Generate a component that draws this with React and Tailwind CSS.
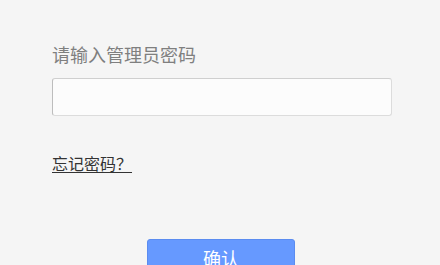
export default function App() {
  return (
    <div className="w-[440px] h-[265px] overflow-hidden bg-[#f5f5f5]" style={{ fontFamily: '"Noto Sans CJK SC", "Liberation Sans", sans-serif' }}>
      <div className="pl-[52px] pr-[48px] pt-[42px]">
        <div className="text-[18px] leading-[24px] text-[#7f7f7f]">请输入管理员密码</div>
        <input
          type="password"
          className="mt-[12px] block w-[340px] h-[38px] bg-[#fcfcfc] border border-[#dcdcdc] border-l-[#bdbdbd] border-t-[#cfcfcf] rounded-[3px] outline-none"
        />
        <div className="mt-[35px]">
          <a className="text-[16px] leading-[22px] text-[#333] underline underline-offset-[2px]">忘记密码？</a>
        </div>
      </div>
      <div className="flex justify-center mt-[64px] pl-[2px]">
        <button className="w-[148px] h-[40px] bg-[#6699ff] rounded-[3px] border border-[#5b8cf0] text-white text-[18px] leading-[24px] pt-[6px] flex justify-center items-start">确认</button>
      </div>
    </div>
  );
}
